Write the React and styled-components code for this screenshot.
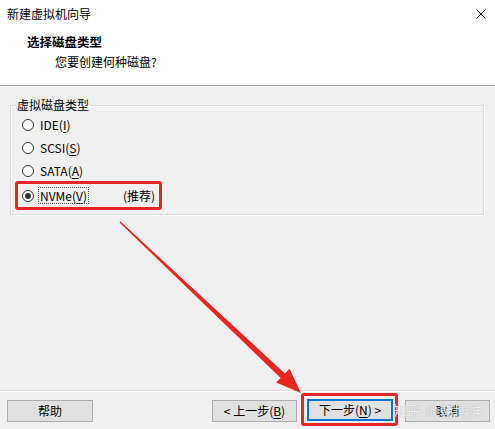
import React from 'react'
import styled, { createGlobalStyle } from 'styled-components'

const GlobalStyle = createGlobalStyle`
  html, body {
    margin: 0;
    padding: 0;
    background: #f0f0f0;
  }
  * {
    box-sizing: border-box;
  }
`

const Window = styled.div`
  position: relative;
  width: 495px;
  height: 429px;
  display: flex;
  flex-direction: column;
  background: #f0f0f0;
  font-family: "Noto Sans CJK SC", "Noto Sans", sans-serif;
  font-size: 12px;
  color: #000;
  overflow: hidden;
`

const Top = styled.div`
  background: #fff;
  height: 85px;
  border-bottom: 1px solid #a0a0a0;
  box-sizing: content-box;
`

const TitleBar = styled.div`
  height: 27px;
  display: flex;
  align-items: center;
  justify-content: space-between;
  padding: 0 9px 0 7px;
  line-height: 16px;
`

const CloseIcon = styled.svg`
  width: 10px;
  height: 10px;
`

const Header = styled.div`
  display: flex;
  flex-direction: column;
  gap: 4px;
  padding: 7px 0 0 27px;
`

const HeaderTitle = styled.div`
  font-weight: 700;
  line-height: 16px;
  font-size: 12.5px;
`

const HeaderSub = styled.div`
  line-height: 16px;
  padding-left: 28px;
`

const Body = styled.div`
  flex: 1;
  padding: 11px 11px 0 10px;
`

const GroupBox = styled.fieldset`
  margin: 0;
  padding: 0 0 4px 11px;
  border: 1px solid #dcdcdc;
  box-shadow: inset 1px 1px 0 #fff, 1px 1px 0 #fff;
  min-width: 0;
`

const Legend = styled.legend`
  padding: 0 1px;
  margin-left: -6px;
  line-height: 16px;
`

const Option = styled.div`
  height: 23px;
  display: flex;
  align-items: center;
  gap: 5px;
`

const RadioCircle = styled.span`
  width: 12px;
  height: 12px;
  border-radius: 50%;
  border: 1px solid #333;
  background: #fff;
  display: flex;
  align-items: center;
  justify-content: center;
  &::after {
    content: '';
    width: 6px;
    height: 6px;
    border-radius: 50%;
    background: ${({ checked }) => (checked ? '#333' : 'transparent')};
  }
`

const OptionLabel = styled.span`
  line-height: 15px;
  padding: 0 1px;
  outline: ${({ focused }) => (focused ? '1px dotted #555' : 'none')};
`

const Key = styled.span`
  text-decoration: underline;
  text-underline-offset: 2px;
`

const Highlight = styled.div`
  width: 147px;
  margin: -1px 0 0 -7px;
  padding-left: 4px;
  border: 3px solid #e5262b;
  border-radius: 3px;
`

const Recommend = styled.span`
  margin-left: 30px;
`

const Footer = styled.div`
  height: 39px;
  border-top: 1px solid #dfdfdf;
  box-shadow: inset 0 1px 0 #fff;
  display: flex;
  align-items: flex-start;
  padding: 9px 5px 0 7px;
`

const Button = styled.button`
  width: ${({ w }) => w || 85}px;
  height: 22px;
  margin: 0;
  padding: 0;
  font: inherit;
  font-size: 12px;
  line-height: 16px;
  color: #000;
  background: #e1e1e1;
  border: ${({ primary }) => (primary ? '2px solid #0078d7' : '1px solid #adadad')};
  margin-left: ${({ ml }) => ml || 0};
`

const ButtonMark = styled.div`
  margin: -7px 0 0 4px;
  padding: 3px 2px 2px 3px;
  border: 3px solid #e5262b;
  border-radius: 3px;
`

const Arrow = styled.svg`
  position: absolute;
  left: 0;
  top: 0;
  width: 495px;
  height: 429px;
  pointer-events: none;
`

const Watermark = styled.div`
  position: absolute;
  left: 393px;
  top: 401px;
  font-size: 14px;
  line-height: 18px;
  color: rgba(255, 255, 255, 0.85);
  text-shadow: 0 0 1px rgba(0, 0, 0, 0.35);
  letter-spacing: 0.5px;
  pointer-events: none;
`

const options = [
  { label: 'IDE', key: 'I' },
  { label: 'SCSI', key: 'S' },
  { label: 'SATA', key: 'A' },
]

export default function App() {
  return (
    <>
      <GlobalStyle />
      <Window>
        <Top>
          <TitleBar>
            <span>新建虚拟机向导</span>
            <CloseIcon viewBox="0 0 10 10">
              <path d="M0.5 0.5 L9.5 9.5 M9.5 0.5 L0.5 9.5" stroke="#111" strokeWidth="1" fill="none" />
            </CloseIcon>
          </TitleBar>
          <Header>
            <HeaderTitle>选择磁盘类型</HeaderTitle>
            <HeaderSub>您要创建何种磁盘?</HeaderSub>
          </Header>
        </Top>

        <Body>
          <GroupBox>
            <Legend>虚拟磁盘类型</Legend>
            {options.map(o => (
              <Option key={o.label}>
                <RadioCircle />
                <OptionLabel>
                  {o.label}(<Key>{o.key}</Key>)
                </OptionLabel>
              </Option>
            ))}
            <Highlight>
              <Option>
                <RadioCircle checked />
                <OptionLabel focused>
                  NVMe(<Key>V</Key>)
                </OptionLabel>
                <Recommend>(推荐)</Recommend>
              </Option>
            </Highlight>
          </GroupBox>
        </Body>

        <Footer>
          <Button w={86}>帮助</Button>
          <Button ml="auto">&lt; 上一步(<Key>B</Key>)</Button>
          <ButtonMark>
            <Button w={86} primary>下一步(<Key>N</Key>) &gt;</Button>
          </ButtonMark>
          <Button ml="7px">取消</Button>
        </Footer>

        <Arrow viewBox="0 0 495 429">
          <polygon
            points="119.5,222.5 120.5,221.5 284.9,373.6 289.5,368.8 301,393 276.2,382.6 280.7,378"
            fill="#e8251e"
          />
        </Arrow>
        <Watermark>知乎 @韩博洋</Watermark>
      </Window>
    </>
  )
}
